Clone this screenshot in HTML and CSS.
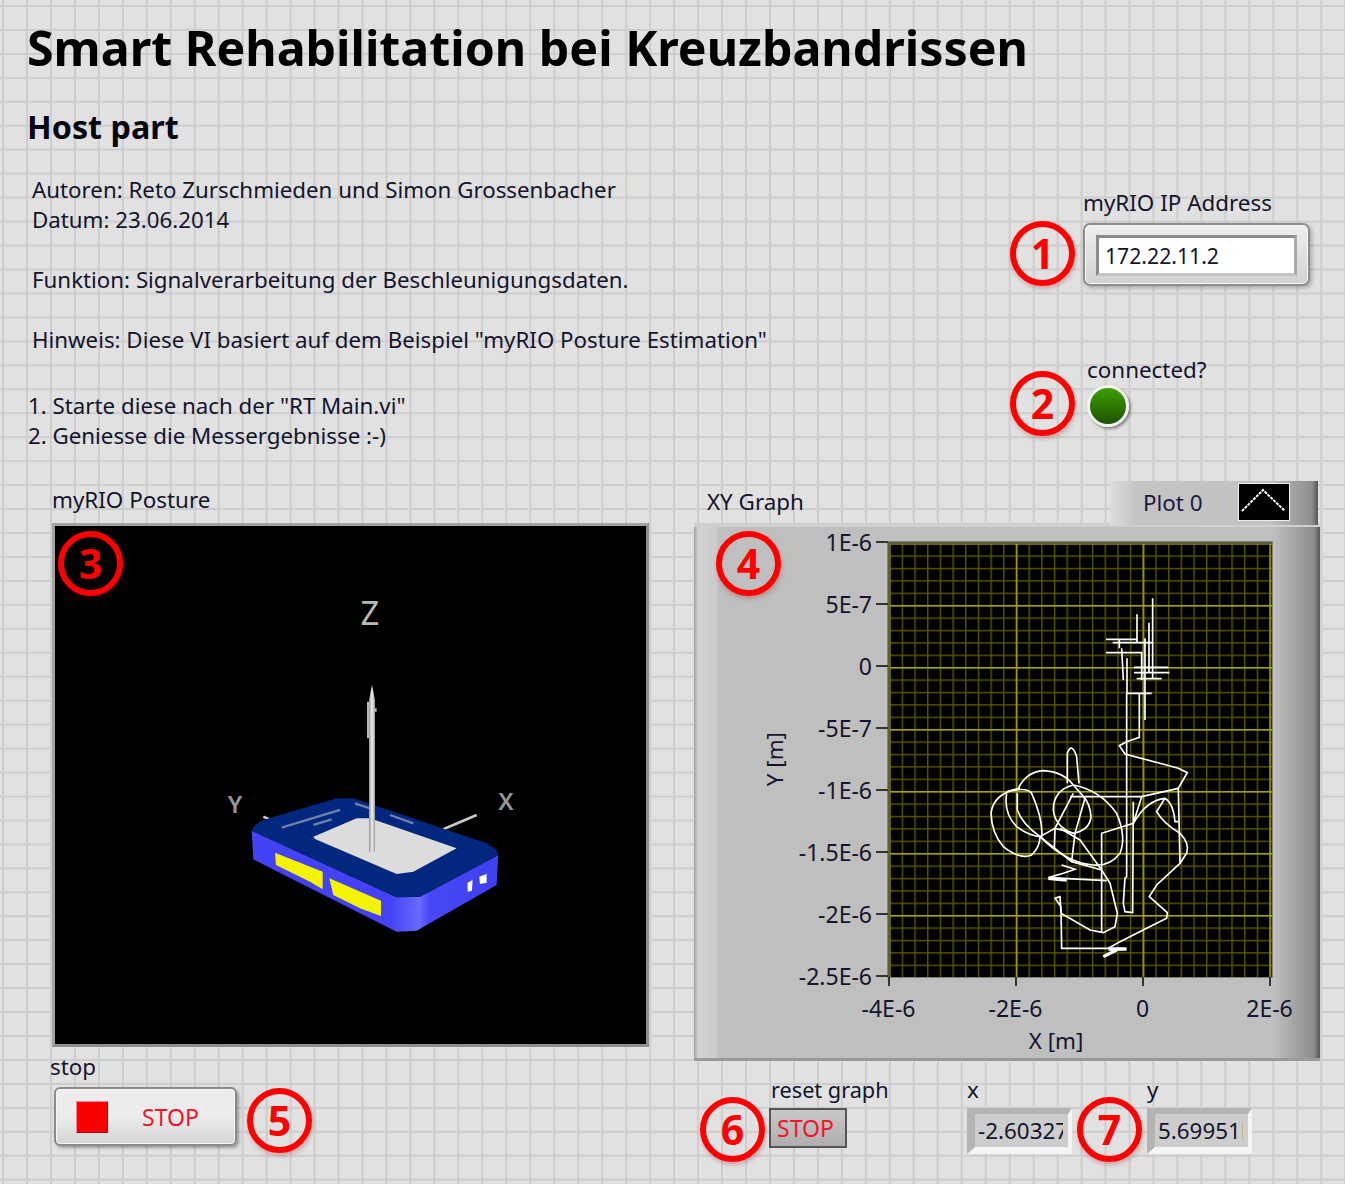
FILE: index.html
```html
<!DOCTYPE html>
<html lang="de">
<head>
<meta charset="utf-8">
<title>Smart Rehabilitation bei Kreuzbandrissen</title>
<link rel="stylesheet" href="styles.css">
</head>
<body>
<main class="panel">
  <header class="head">
    <h1 class="title">Smart Rehabilitation bei Kreuzbandrissen</h1>
    <h2 class="subtitle">Host part</h2>
  </header>

  <section class="info">
    <div class="notes">
      <p class="note">Autoren: Reto Zurschmieden und Simon Grossenbacher<br>Datum: 23.06.2014</p>
      <p class="note">Funktion: Signalverarbeitung der Beschleunigungsdaten.</p>
      <p class="note">Hinweis: Diese VI basiert auf dem Beispiel "myRIO Posture Estimation"</p>
      <p class="note note-steps">1. Starte diese nach der "RT Main.vi"<br>2. Geniesse die Messergebnisse :-)</p>
    </div>
    <div class="side">
      <div class="label">myRIO IP Address</div>
      <div class="ip-frame"><div class="ip-field">172.22.11.2</div></div>
      <div class="label label-conn">connected?</div>
      <div class="led"></div>
    </div>
  </section>

  <section class="lower">
    <div class="posture">
      <div class="label label-posture">myRIO Posture</div>
      <div class="scene-frame">
        <svg class="scene" width="589" height="515" viewBox="0 0 589 515">
          <defs>
            <linearGradient id="side" x1="0" x2="1" y1="0" y2="0">
              <stop offset="0" stop-color="#4343f5"/>
              <stop offset=".56" stop-color="#4343f5"/>
              <stop offset=".68" stop-color="#6a6aff"/>
              <stop offset=".72" stop-color="#4747f8"/>
              <stop offset="1" stop-color="#4040f0"/>
            </linearGradient>
            <linearGradient id="axis" x1="0" x2="1" y1="0" y2="0">
              <stop offset="0" stop-color="#8d8d8d"/>
              <stop offset=".5" stop-color="#f2f2f2"/>
              <stop offset="1" stop-color="#9a9a9a"/>
            </linearGradient>
          </defs>
          <text class="axis-name" x="315" y="98" text-anchor="middle">Z</text>
          <text class="axis-name axis-small" x="180" y="286" text-anchor="middle">Y</text>
          <text class="axis-name axis-small" x="451" y="283" text-anchor="middle">X</text>
          <g transform="translate(145 133) scale(.3333)">
            <path class="stub" d="M730 508 830 465M190 470 213 480"/>
            <path fill="url(#side)" d="M155 512 160 598 590 815 650 812 890 675 895 585 660 710 590 712Z"/>
            <path fill="#02277f" d="M155 512 165 495 190 480 410 415 460 415 860 550 890 570 895 585 660 710 590 712Z"/>
            <path fill="#dcdcdc" d="M340 530 470 475 510 475 770 565 640 635 590 642 345 537Z"/>
            <path class="print" d="M245 503 420 450M340 495 395 478M465 430 510 445M570 465 640 490"/>
            <path fill="#f4f400" d="M225 578 368 635 368 688 330 665 228 615Z"/>
            <path fill="#f4f400" d="M388 655 543 722 543 768 480 745 400 705Z"/>
            <path fill="#fff" d="M803 668 818 660 816 692 803 695Z"/>
            <path fill="#fff" d="M838 650 860 642 860 668 840 672Z"/>
            <path fill="url(#axis)" d="M507 575V120L510 105 516 75 522 105 525 120V575Z"/>
            <path fill="#b8b8b8" d="M501 125H508V235H501ZM524 145H530V155H524Z"/>
          </g>
        </svg>
      </div>
      <div class="label label-stop">stop</div>
      <div class="stop-button"><span class="stop-square"></span><span class="stop-text">STOP</span></div>
    </div>

    <div class="graph">
      <div class="graph-top">
        <div class="label label-xy">XY Graph</div>
        <div class="legend">
          <span class="legend-name">Plot 0</span>
          <svg class="swatch" width="50" height="36" viewBox="0 0 50 36"><path d="M3 27 24 6 46 27" fill="none" stroke="#fff" stroke-width="2" stroke-dasharray="3 1"/></svg>
        </div>
      </div>
      <div class="frame">
        <div class="y-side">
          <div class="y-title">Y [m]</div>
          <div class="y-scale">
            <span>1E-6</span><span>5E-7</span><span>0</span><span>-5E-7</span><span>-1E-6</span><span>-1.5E-6</span><span>-2E-6</span><span>-2.5E-6</span>
          </div>
        </div>
        <svg class="plot" width="384" height="435" viewBox="0 0 384 435">
          <defs>
            <pattern id="minor" width="12.68" height="12.4" patternUnits="userSpaceOnUse" x="1" y="1">
              <path d="M.7 0V12.4M0 .7H12.68" stroke="#565600" stroke-width="1.4" fill="none"/>
            </pattern>
            <pattern id="major" width="126.8" height="62" patternUnits="userSpaceOnUse" x="1" y="1">
              <path d="M.7 0V62M0 .7H126.8" stroke="#a6a600" stroke-width="1.5" fill="none"/>
            </pattern>
          </defs>
          <rect width="384" height="435" fill="#000"/>
          <rect width="384" height="435" fill="url(#minor)"/>
          <rect width="384" height="435" fill="url(#major)"/>
          <path d="M0 1H384M1 0V435" stroke="#5f5f30" stroke-width="2" fill="none"/>
          <g class="trace" transform="translate(72 38) scale(.3333)">
            <path d="M578 55V295M531 103V190M567 128V280M555 175V420M545 215V300M501 235V340M438 178H530M458 188H578M438 218H545M522 262H625M522 278H628M530 296H605M500 340H575M478 178V205M485 205 490 300"/>
            <path d="M500 340V890L495 895 490 970 495 995 518 998 520 665"/>
            <path d="M538 340V472L500 485 478 497 495 522 600 550 655 565 682 578 655 625 660 850 590 915 568 950 622 998 620 1015 560 1045 480 1085 445 1105H305L303 980 285 955 300 950 303 1000 390 1050 430 1058 465 1040 472 1000 450 910 425 870 360 780 300 745"/>
            <path d="M180 625Q100 640 93 700 95 760 130 800 180 840 215 825 240 800 240 770"/>
            <path d="M140 640Q130 700 170 740 210 770 245 770 250 720 215 640 200 620 140 635"/>
            <path d="M172 640V690Q185 730 240 770L335 845 425 870M240 770 285 745 340 760"/>
            <path d="M175 625Q200 575 250 572 310 575 340 615L375 655 345 760 335 845"/>
            <path d="M340 615Q280 630 280 690 285 740 340 760 390 750 393 710 390 670 370 650"/>
            <path d="M340 615Q420 630 470 700 500 770 480 820 450 860 400 855 320 850 240 770"/>
            <path d="M322 610V520Q335 485 350 530L357 610M340 640 285 745 283 805"/>
            <path d="M330 650H545L520 730 425 760V1055"/>
            <path d="M615 655Q560 660 520 730M615 655 590 695Q610 730 660 760 690 790 680 820L660 850M615 655Q640 670 645 725H655M545 650 655 625"/>
            <path d="M305 855 345 868 310 880 265 893 440 902"/>
            <path class="thick" d="M265 895 320 900M445 1107H500M430 1130 470 1110"/>
          </g>
        </svg>
        <div class="x-side">
          <div class="x-scale"><span>-4E-6</span><span>-2E-6</span><span>0</span><span>2E-6</span></div>
          <div class="x-title">X [m]</div>
        </div>
      </div>
      <div class="readouts">
        <div class="reset">
          <div class="label label-reset">reset graph</div>
          <div class="reset-button">STOP</div>
        </div>
        <div class="readout readout-x">
          <div class="label">x</div>
          <div class="num-frame"><div class="num-field">-2.60327E-6</div></div>
        </div>
        <div class="readout readout-y">
          <div class="label">y</div>
          <div class="num-frame"><div class="num-field">5.69951E-7</div></div>
        </div>
      </div>
    </div>
  </section>

  <span class="callout c1">1</span>
  <span class="callout c2">2</span>
  <span class="callout c3">3</span>
  <span class="callout c4">4</span>
  <span class="callout c5">5</span>
  <span class="callout c6">6</span>
  <span class="callout c7">7</span>
</main>
</body>
</html>
```

FILE: styles.css
```css
* { box-sizing: border-box; }

html, body { margin: 0; padding: 0; background: #fff; }

body {
  font-family: "Noto Sans", "Liberation Sans", sans-serif;
  color: #14142c;
}

.panel {
  position: relative;
  width: 1345px;
  height: 1184px;
  overflow: hidden;
  background-color: #e1e1e1;
  background-image:
    linear-gradient(90deg, #cdcdcd 2px, transparent 2px),
    linear-gradient(180deg, #cdcdcd 2px, transparent 2px);
  background-size: 23.98px 23.96px;
  background-position: 2px 5px;
}

.head { padding: 14px 0 0 27px; }

.title {
  margin: 0;
  font-size: 48.3px;
  line-height: 66px;
  font-weight: 700;
  color: #000;
  white-space: nowrap;
}

.subtitle {
  margin: 24px 0 0;
  font-size: 32.3px;
  line-height: 44px;
  font-weight: 700;
  color: #050510;
}

.info {
  display: flex;
  justify-content: space-between;
  height: 334px;
  padding: 0 34px 0 32px;
}

.notes { padding-top: 27px; }

.note {
  margin: 0 0 30px;
  font-size: 22.3px;
  line-height: 30px;
  white-space: nowrap;
}

.note-steps { margin: 36px 0 0 -4px; }

.label {
  font-size: 22.4px;
  line-height: 30px;
  white-space: nowrap;
}

.label-reset { font-size: 21.7px; }

.side { width: 228px; padding-top: 40px; }

.ip-frame {
  width: 227px;
  height: 63px;
  margin-top: 5px;
  padding: 10px 11px;
  border: 2px solid #8d8d8d;
  border-radius: 7px;
  background: linear-gradient(#eeeeee, #d2d2d2);
  box-shadow: 2px 2px 4px rgba(0, 0, 0, .25), inset 0 0 0 1px #f7f7f7;
}

.ip-field {
  height: 41px;
  padding-left: 6px;
  border: 3px solid #8b8b8b;
  border-bottom-color: #c4c4c4;
  border-right-color: #a8a8a8;
  background: #fff;
  font-size: 21.2px;
  line-height: 35px;
}

.label-conn { margin: 69px 0 0 4px; }

.led {
  width: 42px;
  height: 42px;
  margin: 0 0 0 4px;
  border: 3px solid #f2f2f2;
  border-radius: 50%;
  background: linear-gradient(#3f9f00, #1c5200);
  box-shadow: 2px 2px 3px rgba(0, 0, 0, .4);
}

.lower {
  display: grid;
  grid-template-columns: 642px 651px;
  padding-left: 52px;
}

.label-posture { height: 41px; line-height: 36px; }

.scene-frame {
  width: 597px;
  height: 524px;
  padding: 1px 1px 1px 0;
  background: #000;
  border: 3px solid #a2a2a2;
  border-right-color: #8e8e8e;
  border-bottom-color: #8e8e8e;
}

.scene { display: block; }

.axis-name {
  fill: #b9b9b9;
  font-family: "Noto Sans", sans-serif;
  font-size: 33px;
}

.axis-small { font-size: 24px; fill: #969696; font-weight: 600; }

.stub { stroke: #c9c9c9; stroke-width: 8; fill: none; }

.print { stroke: #6f80ac; stroke-width: 7; fill: none; }

.label-stop { margin: 5px 0 0 -2px; }

.stop-button {
  display: flex;
  align-items: center;
  width: 183px;
  height: 59px;
  margin: 5px 0 0 2px;
  padding-left: 20px;
  border: 2px solid #8a8a8a;
  border-radius: 6px;
  background: linear-gradient(#ececec 0 50%, #d4d4d4);
  box-shadow: 2px 2px 3px rgba(0, 0, 0, .3), inset 0 0 0 1px #f6f6f6;
}

.stop-square {
  width: 32px;
  height: 32px;
  background: #fb0000;
  border: 1px solid #a01010;
  border-left-color: #ff7f9f;
  border-top-color: #ff7f9f;
}

.stop-text {
  margin-left: 34px;
  color: #f5142c;
  font-size: 23px;
}

.graph-top {
  display: flex;
  justify-content: space-between;
  align-items: flex-end;
  height: 44px;
  margin-top: -3px;
  padding: 0 27px 0 13px;
}

.label-xy { padding-bottom: 6px; }

.legend {
  display: flex;
  align-items: center;
  justify-content: space-between;
  width: 207px;
  height: 44px;
  margin-bottom: -2px;
  padding: 0 29px 2px 32px;
  background: linear-gradient(90deg, #dcdcdc 0, #c4c4c4 12%, #c2c2c2 76%, #8d8d8d 97%, #555 100%);
  font-size: 22.4px;
}

.legend-name { color: #1a1a40; }

.swatch {
  display: block;
  background: #000;
  outline: 1px solid #eee;
}

.frame {
  display: grid;
  grid-template-columns: 194px 384px 48px;
  grid-template-rows: 19px 435px 84px;
  width: 626px;
  height: 538px;
  background:
    linear-gradient(90deg, #9f9f9f 0, #d3d3d3 4px, #cbcbcb 22px, #bfbfbf 25px, #bfbfbf 92.5%, #8d8d8d 99%, #555 100%);
  box-shadow: inset 0 -3px 0 #9a9a9a, inset 0 4px 0 #cfcfcf;
}

.y-side {
  grid-column: 1;
  grid-row: 2;
  display: flex;
  position: relative;
}

.y-title {
  align-self: center;
  width: 24px;
  margin-left: 69px;
  font-size: 22.4px;
  line-height: 24px;
  white-space: nowrap;
  writing-mode: vertical-rl;
  rotate: 180deg;
}

.y-scale {
  position: absolute;
  right: 0;
  top: -31px;
  display: flex;
  flex-direction: column;
  align-items: flex-end;
}

.y-scale span {
  display: flex;
  align-items: center;
  gap: 4px;
  height: 62px;
  font-size: 23px;
  white-space: nowrap;
}

.y-scale span::after {
  content: "";
  width: 12px;
  height: 2px;
  background: #333;
}

.plot {
  display: block;
  grid-column: 2;
  grid-row: 2;
  outline: 1px solid #808080;
}

.x-side { grid-column: 1 / -1; grid-row: 3; padding-left: 131px; }

.x-scale { display: flex; }

.x-scale span {
  position: relative;
  flex: 0 0 127px;
  padding-top: 16px;
  text-align: center;
  font-size: 23px;
  line-height: 30px;
}

.x-scale span::before {
  content: "";
  position: absolute;
  top: 0;
  left: 63px;
  width: 2px;
  height: 9px;
  background: #333;
}

.x-title {
  width: 462px;
  padding-top: 3px;
  text-align: center;
  font-size: 22.4px;
  line-height: 30px;
}

.trace { fill: none; stroke: #fff; stroke-width: 5; }

.thick { stroke-width: 10; }

.readouts {
  display: flex;
  padding-top: 14px;
  padding-left: 77px;
}

.reset { width: 196px; }

.reset-button {
  width: 78px;
  height: 40px;
  margin-top: 3px;
  margin-left: -2px;
  padding-left: 6px;
  border: 2px solid #555;
  background: linear-gradient(#c8c8c8, #aeaeae);
  color: #f5142c;
  font-size: 23px;
  line-height: 36px;
}

.readout-x { width: 180px; }

.readout-y { width: 110px; }

.num-frame {
  width: 105px;
  height: 46px;
  margin-top: 3px;
  border-style: solid;
  border-width: 6px 4px 7px 8px;
  border-color: #b4b4b4 #f4f4f4 #f4f4f4 #b4b4b4;
}

.num-field {
  height: 33px;
  overflow: hidden;
  padding-left: 3px;
  border-right: 5px solid #cdcdcd;
  background: #cdcdcd;
  font-size: 22.4px;
  line-height: 33px;
  white-space: nowrap;
}

.callout {
  position: absolute;
  width: 65px;
  height: 65px;
  border: 6px solid #f00;
  border-radius: 50%;
  color: #f00;
  font-size: 41px;
  font-weight: 700;
  line-height: 53px;
  text-align: center;
  box-shadow: 1px 3px 4px rgba(150, 0, 0, .25);
}

.c1 { left: 1010px; top: 221px; }
.c2 { left: 1010px; top: 371px; }
.c3 { left: 58px; top: 531px; }
.c4 { left: 716px; top: 531px; }
.c5 { left: 247px; top: 1088px; }
.c6 { left: 700px; top: 1097px; }
.c7 { left: 1077px; top: 1097px; }
```
